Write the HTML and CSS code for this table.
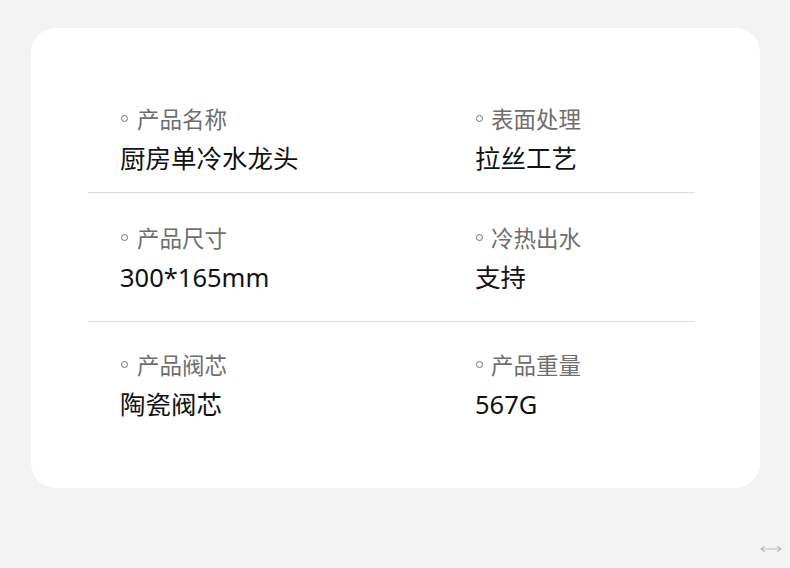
FILE: index.html
```html
<!DOCTYPE html>
<html lang="zh">
<head>
<meta charset="utf-8">
<link rel="stylesheet" href="styles.css">
</head>
<body>
<div class="card">
  <div class="row r1">
    <div class="cell left">
      <div class="label"><span class="dot"></span>产品名称</div>
      <div class="value">厨房单冷水龙头</div>
    </div>
    <div class="cell right">
      <div class="label"><span class="dot"></span>表面处理</div>
      <div class="value">拉丝工艺</div>
    </div>
  </div>
  <div class="row r2">
    <div class="cell left">
      <div class="label"><span class="dot"></span>产品尺寸</div>
      <div class="value">300*165mm</div>
    </div>
    <div class="cell right">
      <div class="label"><span class="dot"></span>冷热出水</div>
      <div class="value">支持</div>
    </div>
  </div>
  <div class="row r3">
    <div class="cell left">
      <div class="label"><span class="dot"></span>产品阀芯</div>
      <div class="value">陶瓷阀芯</div>
    </div>
    <div class="cell right">
      <div class="label"><span class="dot"></span>产品重量</div>
      <div class="value">567G</div>
    </div>
  </div>
</div>
<div class="foot">
  <svg class="arrow" width="22" height="8" viewBox="0 0 22 8"><path d="M1 4H21M1 4L4.5 1.5M1 4L4.5 6.5M21 4L17.5 1.5M21 4L17.5 6.5" stroke="#bdbdbd" stroke-width="1.2" fill="none" stroke-linecap="round"/></svg>
</div>
</body>
</html>
```
FILE: styles.css
```css
html, body {
  margin: 0;
  padding: 0;
}
body {
  background: #f3f3f3;
  width: 790px;
  height: 568px;
  overflow: hidden;
  font-family: "Noto Sans CJK SC", "Noto Sans", sans-serif;
  padding-top: 28px;
  box-sizing: border-box;
}
.card {
  margin-left: 31px;
  width: 729px;
  height: 460px;
  background: #fff;
  border-radius: 25px;
  box-sizing: border-box;
  padding: 75px 0 0 57px;
}
.row {
  width: 607px;
  display: flex;
  box-sizing: border-box;
}
.r1 {
  padding-bottom: 19px;
  border-bottom: 1px solid #dcdcdc;
}
.r2 {
  padding-top: 29px;
  padding-bottom: 29px;
  border-bottom: 1px solid #dcdcdc;
}
.r3 {
  padding-top: 27px;
}
.cell {
  display: flex;
  flex-direction: column;
  gap: 10px;
}
.left {
  width: 355px;
  padding-left: 32px;
}
.right .dot {
  margin-right: 8px;
}
.label {
  display: flex;
  align-items: center;
  font-size: 22.5px;
  line-height: 30px;
  color: #6e6e6e;
}
.dot {
  width: 5px;
  height: 5px;
  border: 1.2px solid #707070;
  border-radius: 50%;
  margin-left: 1px;
  margin-right: 9px;
}
.value {
  font-family: "Noto Sans", "Noto Sans CJK SC", sans-serif;
  font-size: 25.5px;
  line-height: 30px;
  color: #111;
}
.foot {
  display: flex;
  justify-content: flex-end;
  padding: 57px 8px 0 0;
}
.arrow {
  display: block;
}
```
